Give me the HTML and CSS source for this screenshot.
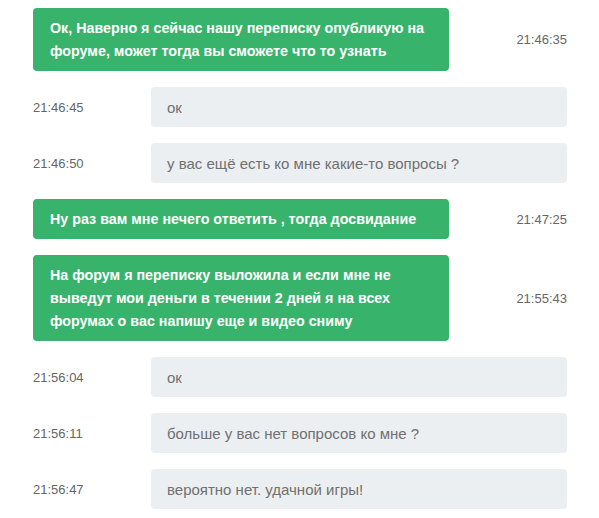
FILE: index.html
```html
<!DOCTYPE html>
<html lang="ru">
<head>
    <meta charset="UTF-8">
    <meta name="viewport" content="width=device-width, initial-scale=1.0">
    <title>Переписка</title>
    <link rel="stylesheet" href="styles.css">
</head>

<body>
    <div class="chat">
        <div class="msg out">
            <div class="bubble">Ок, Наверно я сейчас нашу переписку опубликую на форуме, может тогда вы сможете что то узнать</div>
            <div class="time">21:46:35</div>
        </div>
        <div class="msg in">
            <div class="time">21:46:45</div>
            <div class="bubble">ок</div>
        </div>
        <div class="msg in">
            <div class="time">21:46:50</div>
            <div class="bubble">у вас ещё есть ко мне какие-то вопросы ?</div>
        </div>
        <div class="msg out">
            <div class="bubble">Ну раз вам мне нечего ответить , тогда досвидание</div>
            <div class="time">21:47:25</div>
        </div>
        <div class="msg out">
            <div class="bubble">На форум я переписку выложила и если мне не выведут мои деньги в течении 2 дней я на всех форумах о вас напишу еще и видео сниму</div>
            <div class="time">21:55:43</div>
        </div>
        <div class="msg in">
            <div class="time">21:56:04</div>
            <div class="bubble">ок</div>
        </div>
        <div class="msg in">
            <div class="time">21:56:11</div>
            <div class="bubble">больше у вас нет вопросов ко мне ?</div>
        </div>
        <div class="msg in">
            <div class="time">21:56:47</div>
            <div class="bubble">вероятно нет. удачной игры!</div>
        </div>
    </div>
</body>
</html>
```

FILE: styles.css
```css
body {
    margin: 0;
    background-color: #fff;
    font-family: "Liberation Sans", Arial, sans-serif;
}

.chat {
    width: 534px;
    margin-left: 33px;
    padding-top: 8px;
    display: flex;
    flex-direction: column;
    gap: 16px;
}

.msg {
    display: flex;
    align-items: center;
    justify-content: space-between;
}

.bubble {
    width: 416px;
    box-sizing: border-box;
    padding: 9px 17px 8px;
    border-radius: 4px;
    font-size: 14.3px;
    line-height: 23px;
}

.out .bubble {
    background-color: #37b36b;
    color: #fff;
    font-weight: bold;
}

.in .bubble {
    background-color: #eceff1;
    color: #707070;
    font-size: 15px;
    padding-left: 16px;
}

.time {
    font-size: 13px;
    color: #666;
}
```
